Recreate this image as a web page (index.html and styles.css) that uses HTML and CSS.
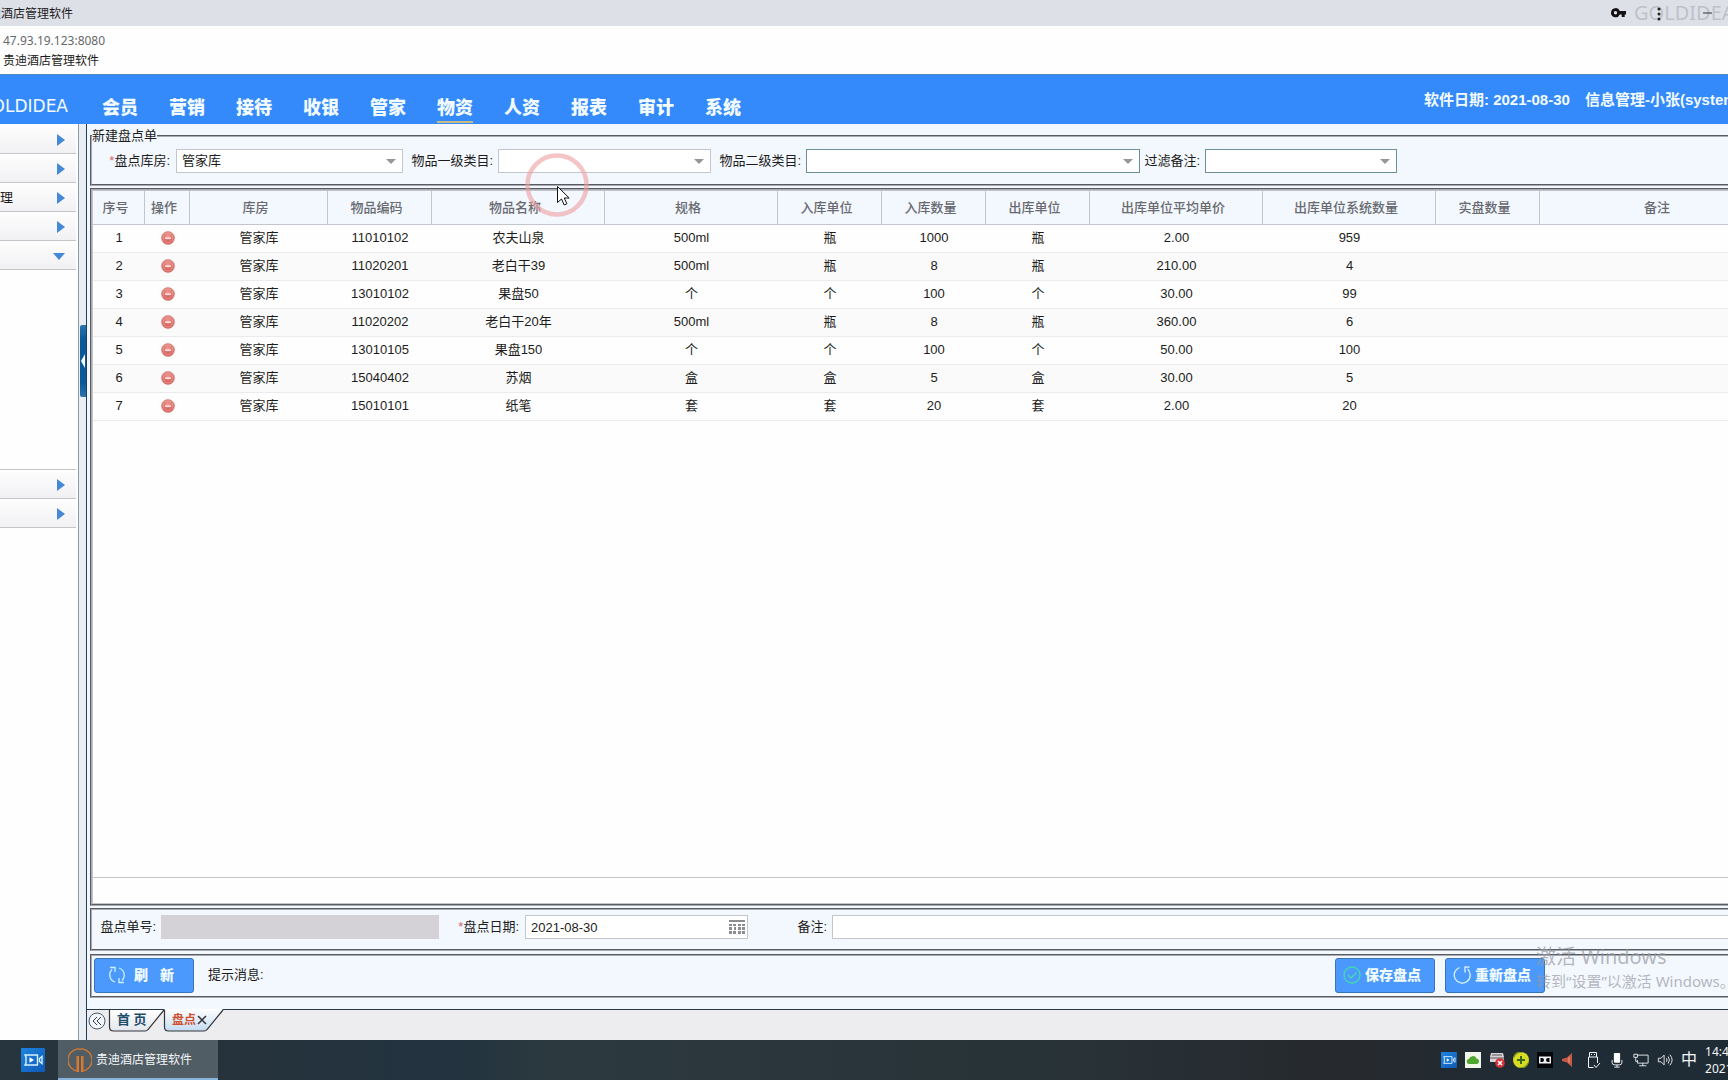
FILE: index.html
```html
<!DOCTYPE html>
<html lang="zh-CN">
<head>
<meta charset="utf-8">
<title>贵迪酒店管理软件</title>
<link rel="stylesheet" href="styles.css">
</head>
<body>
<svg class="defs" aria-hidden="true">
  <defs>
    <radialGradient id="redBall" cx="50%" cy="35%" r="65%"><stop offset="0" stop-color="#ee9a92"/><stop offset="1" stop-color="#cb4f4b"/></radialGradient>
    <linearGradient id="blueTile" x1="0" y1="0" x2="1" y2="1"><stop offset="0" stop-color="#1c86e0"/><stop offset="1" stop-color="#1158b4"/></linearGradient>
    <linearGradient id="tabFill" x1="0" y1="0" x2="0" y2="1"><stop offset="0" stop-color="#ffffff"/><stop offset="1" stop-color="#e2e6ec"/></linearGradient>
    <linearGradient id="tabActive" x1="0" y1="0" x2="0" y2="1"><stop offset="0" stop-color="#ffffff"/><stop offset="1" stop-color="#c4dcf2"/></linearGradient>
    <symbol id="minus" viewBox="0 0 14 14"><circle cx="7" cy="7" r="6.5" fill="url(#redBall)" stroke="#d8837d" stroke-width=".6"/><circle cx="7" cy="7" r="5" fill="none" stroke="#f0b0aa" stroke-width=".7"/><rect x="4" y="6.200" width="6" height="1.800" rx=".5" fill="#fbdcd8"/></symbol>
    <symbol id="recorder" viewBox="0 0 24 24"><rect width="24" height="24" rx="1" fill="url(#blueTile)"/><path d="M4 7h12.500v10H4l1-2V9zM18.500 10.500L21 8.500v7l-2.500-2z" fill="none" stroke="#d6f1ff" stroke-width="1.400"/><path d="M8.500 9.300l4.500 2.700-4.500 2.700z" fill="#fff"/></symbol>
  </defs>
</svg>

<header class="titlebar">
  <div class="window-title"><span>贵迪酒店管理软件</span></div>
  <svg class="key" viewBox="0 0 15 10"><path d="M4.500 0a4.500 4.500 0 0 1 4.200 3H15v3.500h-1.300V9h-3V6.500H8.700A4.500 4.500 0 1 1 4.500.3zm0 3a1.700 1.700 0 1 0 0 3.400 1.700 1.700 0 0 0 0-3.400z" fill="#111" fill-rule="evenodd"/></svg>
  <div class="mark">GOLDIDEA
    <svg class="dots" viewBox="0 0 4 14"><circle cx="2" cy="2" r="1.500"/><circle cx="2" cy="7" r="1.500"/><circle cx="2" cy="12" r="1.500"/></svg>
    <svg class="minimize" viewBox="0 0 9 2"><path d="M0 1h9" stroke="#333"/></svg>
  </div>
</header>
<div class="address"><div class="host">47.93.19.123:8080</div><div>贵迪酒店管理软件</div></div>

<div class="topnav">
  <div class="logo"><span>GOLDIDEA</span></div>
  <nav class="menu">
    <a href="#">会员</a><a href="#">营销</a><a href="#">接待</a><a href="#">收银</a><a href="#">管家</a><a href="#" class="on">物资</a><a href="#">人资</a><a href="#">报表</a><a href="#">审计</a><a href="#">系统</a>
  </nav>
  <div class="session"><span>软件日期: 2021-08-30</span><span>信息管理-小张(system)</span></div>
</div>

<main class="main">
  <aside class="sidebar">
    <div class="item"><i class="right"></i></div>
    <div class="item"><i class="right"></i></div>
    <div class="item"><span>理</span><i class="right"></i></div>
    <div class="item"><i class="right"></i></div>
    <div class="item"><i class="down"></i></div>
    <div class="submenu"></div>
    <div class="item"><i class="right"></i></div>
    <div class="item"><i class="right"></i></div>
  </aside>
  <div class="splitter"><button class="handle" aria-label="收起"><svg viewBox="0 0 4 14"><path d="M4 0v14L0 7z" fill="#fff"/></svg></button></div>

  <section class="content">
    <fieldset class="panel filters">
      <legend>新建盘点单</legend>
      <div class="row">
        <label for="store" class="first"><em>*</em>盘点库房:</label>
        <span class="pick w-store"><select id="store"><option>管家库</option></select></span>
        <label for="cat1">物品一级类目:</label>
        <span class="pick w-cat1"><select id="cat1"><option></option></select></span>
        <label for="cat2">物品二级类目:</label>
        <span class="pick w-cat2 strong"><select id="cat2"><option></option></select></span>
        <label for="memo" class="tight">过滤备注:</label>
        <span class="pick w-memo strong"><select id="memo"><option></option></select></span>
      </div>
    </fieldset>

    <div class="panel grid">
      <div class="scroll">
        <table>
          <colgroup><col class="c-no"><col class="c-op"><col class="c-store"><col class="c-m"><col class="c-l"><col class="c-l"><col class="c-m"><col class="c-m"><col class="c-m"><col class="c-l"><col class="c-l"><col class="c-m"><col class="c-memo"></colgroup>
          <thead><tr><th>序号</th><th>操作</th><th>库房</th><th>物品编码</th><th>物品名称</th><th>规格</th><th>入库单位</th><th>入库数量</th><th>出库单位</th><th>出库单位平均单价</th><th>出库单位系统数量</th><th>实盘数量</th><th>备注</th></tr></thead>
          <tbody>
            <tr><td>1</td><td><button class="del" aria-label="删除"><svg><use href="#minus"/></svg></button></td><td>管家库</td><td>11010102</td><td>农夫山泉</td><td>500ml</td><td>瓶</td><td>1000</td><td>瓶</td><td>2.00</td><td>959</td><td></td><td></td></tr>
            <tr><td>2</td><td><button class="del" aria-label="删除"><svg><use href="#minus"/></svg></button></td><td>管家库</td><td>11020201</td><td>老白干39</td><td>500ml</td><td>瓶</td><td>8</td><td>瓶</td><td>210.00</td><td>4</td><td></td><td></td></tr>
            <tr><td>3</td><td><button class="del" aria-label="删除"><svg><use href="#minus"/></svg></button></td><td>管家库</td><td>13010102</td><td>果盘50</td><td>个</td><td>个</td><td>100</td><td>个</td><td>30.00</td><td>99</td><td></td><td></td></tr>
            <tr><td>4</td><td><button class="del" aria-label="删除"><svg><use href="#minus"/></svg></button></td><td>管家库</td><td>11020202</td><td>老白干20年</td><td>500ml</td><td>瓶</td><td>8</td><td>瓶</td><td>360.00</td><td>6</td><td></td><td></td></tr>
            <tr><td>5</td><td><button class="del" aria-label="删除"><svg><use href="#minus"/></svg></button></td><td>管家库</td><td>13010105</td><td>果盘150</td><td>个</td><td>个</td><td>100</td><td>个</td><td>50.00</td><td>100</td><td></td><td></td></tr>
            <tr><td>6</td><td><button class="del" aria-label="删除"><svg><use href="#minus"/></svg></button></td><td>管家库</td><td>15040402</td><td>苏烟</td><td>盒</td><td>盒</td><td>5</td><td>盒</td><td>30.00</td><td>5</td><td></td><td></td></tr>
            <tr><td>7</td><td><button class="del" aria-label="删除"><svg><use href="#minus"/></svg></button></td><td>管家库</td><td>15010101</td><td>纸笔</td><td>套</td><td>套</td><td>20</td><td>套</td><td>2.00</td><td>20</td><td></td><td></td></tr>
          </tbody>
        </table>
      </div>
      <div class="grid-foot"></div>
    </div>

    <div class="panel form row">
      <label for="billno">盘点单号:</label>
      <input id="billno" class="w-bill" disabled>
      <label for="date" class="wide"><em>*</em>盘点日期:</label>
      <span class="datebox w-date"><input id="date" value="2021-08-30"><svg viewBox="0 0 16 15"><g fill="#8b8d90"><path d="M0 0h16v2H0z"/><path d="M0 4h3v2H0zM4 4h3v2H4zM9 4h3v2H9zM13 4h3v2h-3zM0 7h3v3H0zM5 7h2v3H5zM9 7h3v3H9zM13 7h3v3h-3zM0 11h3v3H0zM4 11h3v3H4zM9 11h3v3H9zM13 11h3v3h-3z"/></g></svg></span>
      <label for="remark" class="wider">备注:</label>
      <input id="remark" class="w-remark">
    </div>

    <div class="panel actions">
      <button class="btn refresh"><svg viewBox="0 0 18 18"><g fill="none" stroke="#c9f1ff" stroke-width="1.300"><path d="M7 16A7.500 7.500 0 0 1 4 3.500M2 1.500h5v4.500M11 2a7.500 7.500 0 0 1 3 12.500M16 16.500h-5V12"/></g></svg><span>刷</span><span>新</span></button>
      <span class="tip">提示消息:</span>
      <button class="btn"><svg viewBox="0 0 18 18"><g fill="none" stroke="#42dcae" stroke-width="1.300"><circle cx="9" cy="9" r="8"/><path d="M5 9l3 3 5.500-5.500"/></g></svg>保存盘点</button>
      <button class="btn restart"><svg viewBox="0 0 18 18"><g fill="none" stroke="#d6f4ff" stroke-width="1.300"><path d="M6.500 1.500a8 8 0 1 0 8 1.500M16.500 1.200L12 1v5.500"/></g></svg>重新盘点</button>
      <div class="activate"><div class="big">激活 Windows</div><div>转到“设置”以激活 Windows。</div></div>
    </div>

    <div class="tabs">
      <button class="back" aria-label="向左"><svg viewBox="0 0 18 18"><circle cx="9" cy="9" r="8" fill="#f2f5fa" stroke="#465a70"/><path d="M9 5L5 9l4 4M13 5L9 9l4 4" fill="none" stroke="#333d4a"/></svg></button>
      <a href="#" class="tab home"><svg viewBox="0 0 56 22"><path d="M.5 0v17q0 4 4 4H36q2 0 3-1.500L55 0z" fill="url(#tabFill)"/><path d="M.5 0v17q0 4 4 4H36q2 0 3-1.500L55 0" fill="none" stroke="#33363d" stroke-width="1.200"/></svg><span>首 页</span></a>
      <a href="#" class="tab current"><svg viewBox="0 0 60 22"><path d="M.5-1v18q0 4 4 4H40q2 0 3-1.500L59-1z" fill="url(#tabActive)"/><path d="M.5 0v17q0 4 4 4H40q2 0 3-1.500L59 0" fill="none" stroke="#33363d" stroke-width="1.200"/><path d="M34 6l8 8M42 6l-8 8" stroke="#3a3a40" stroke-width="1.600"/></svg><span>盘点</span></a>
    </div>
  </section>
</main>

<footer class="taskbar">
  <svg class="launch" viewBox="0 0 24 24"><use href="#recorder"/></svg>
  <div class="app"><svg viewBox="0 0 24 24"><g fill="none" stroke="#c8743a" stroke-width="1.500"><path d="M8.500 23A11.300 11.300 0 0 1 9 1h6a11.300 11.300 0 0 1 .5 22"/></g><path d="M8.500 8H11v16H8.500zM13 8h2.500v16H13z" fill="#d9792f"/></svg>贵迪酒店管理软件</div>
  <div class="tray">
    <svg viewBox="0 0 16 16"><use href="#recorder"/></svg>
    <svg viewBox="0 0 16 16"><path d="M0 0h16v16H0z" fill="#f0f6ea"/><path d="M4.500 12a2.500 2.500 0 0 1-.5-5 4 4 0 0 1 7.500-.5A2.800 2.800 0 0 1 12 12z" fill="#4ea72c"/></svg>
    <svg viewBox="0 0 16 16"><path d="M2 1h12l1 4v5H1V5z" fill="#d8d3d6"/><path d="M3 3h10M1 6h14" stroke="#555"/><circle cx="11" cy="11" r="4.800" fill="#d5333a"/><path d="M9 9l4 4M13 9l-4 4" stroke="#fff" stroke-width="1.500"/></svg>
    <svg viewBox="0 0 16 16"><circle cx="8" cy="8" r="8" fill="#d8dc22"/><path d="M1 5a8 8 0 0 1 8-5M15 11a8 8 0 0 1-8 5" stroke="#7b9b1c" stroke-width="1.500" fill="none"/><path d="M8 4v8M4 8h8" stroke="#3c6a1c" stroke-width="2"/></svg>
    <svg viewBox="0 0 16 16"><path d="M0 0h16v16H0z" fill="#05070a"/><path d="M2 4.500h12v7H2z" fill="#f0f0f0"/><path d="M3.500 6H5a2 2 0 0 1 0 4H3.500zM12.500 6H11a2 2 0 0 0 0 4h1.500z" fill="#05070a"/></svg>
    <svg class="horn" viewBox="0 0 12 16"><path d="M11 1v14L6 10.500 1 9V7l5-1.500z" fill="#c65a45"/><path d="M8 5v6" stroke="#eaa090"/></svg>
    <svg class="line" viewBox="0 0 16 18"><path d="M4.500 6V1.500h7V6M6.500 3v1M9.500 3v1M3.500 6h9v6M3.500 6v10.500h5M9 14l2 2.500 4-4.500" /></svg>
    <svg viewBox="0 0 16 18"><rect x="4.500" y="1" width="7" height="11" rx="1" fill="#fff"/><path d="M2.500 9v3q0 2.500 3 2.500h5q3 0 3-2.500V9M8 14.500V17M5 17h6" fill="none" stroke="#fff"/></svg>
    <svg class="line" viewBox="0 0 18 18"><path d="M5 3.500h12v9H5V9M1 2.500h4v3.500H1zM3 6v4.500h2M11 12.500v3M7 15.500h8"/></svg>
    <svg class="line" viewBox="0 0 18 18"><path d="M1.500 7h3L8 3.500v11L4.500 11h-3zM10.500 7q1.500 2 0 4M12.500 5q3 4 0 8M14.500 3q5 6 0 12"/></svg>
    <span class="ime">中</span>
    <div class="clock"><div>14:45</div><div>2021/8/30</div></div>
  </div>
</footer>

<svg class="pointer" viewBox="0 0 64 64"><circle cx="32" cy="32" r="29.500" fill="none" stroke="#ee9ea0" stroke-opacity=".6" stroke-width="4.500"/><path d="M32.500 33.500v16l4-3.500 2.700 6 2.700-1.200-2.700-5.800h5z" fill="#fff" stroke="#111"/></svg>
</body>
</html>
```

FILE: styles.css
```css
* { box-sizing: border-box; }
html, body { height: 100%; }
body {
  margin: 0;
  display: flex;
  flex-direction: column;
  overflow: hidden;
  font: 13px/20px "Liberation Sans", "Noto Sans CJK SC", sans-serif;
  color: #1c1c20;
  background: #fefefe;
}
a { color: inherit; text-decoration: none; }
button { font: inherit; color: inherit; padding: 0; border: 0; background: none; }
svg { display: block; flex: none; }
.defs { position: absolute; width: 0; height: 0; }

/* browser chrome */
.titlebar {
  flex: none; height: 26px;
  display: flex; align-items: center;
  background: #dee0e8;
  font-size: 12px;
}
.window-title { width: 73px; padding-top: 2px; overflow: hidden; display: flex; justify-content: flex-end; white-space: nowrap; }
.key { width: 15px; height: 10px; margin-left: auto; }
.mark {
  position: relative;
  width: 94px; margin-left: 8px;
  white-space: nowrap;
  font: 20px/26px "Noto Sans", sans-serif;
  color: #bfc1c9;
}
.dots { position: absolute; left: 23px; top: 7px; width: 4px; height: 14px; fill: #222; }
.minimize { position: absolute; left: 69px; top: 12px; width: 9px; height: 2px; }
.address {
  flex: none; height: 48px; padding: 5px 3px;
  font-size: 12px; line-height: 20px;
}
.host { font-family: "Noto Sans", sans-serif; color: #66686c; }

/* blue navigation */
.topnav {
  flex: none; height: 50px;
  display: flex;
  background: #348afa;
  border-top: 1px solid #4f86c4;
  color: #f2fbff;
  font-weight: bold;
}
.logo {
  width: 68px; padding-top: 20px;
  overflow: hidden; display: flex; justify-content: flex-end;
  font: 17px/22px "DejaVu Sans", sans-serif;
}
.menu { display: flex; gap: 31px; margin: 20px 0 0 34px; font-size: 18px; line-height: 26px; font-weight: 900; }
.menu a { height: 28px; white-space: nowrap; }
.menu .on { border-bottom: 2px solid #c9bd85; }
.session {
  width: 304px; margin-left: auto; padding-top: 14px;
  display: flex; gap: 15px;
  font-size: 15px; line-height: 22px; white-space: nowrap;
}

.main { flex: 1; min-height: 0; display: flex; }

/* sidebar */
.sidebar { flex: none; width: 78px; padding: 1px 2px 0 0; }
.item {
  height: 29px; padding: 2px 11px 0 0;
  display: flex; align-items: center;
  border-bottom: 1px solid #c4c4ca;
  background: linear-gradient(#fefefe, #f1f0f3);
  font-size: 13px;
}
.item i { margin-left: auto; border: 6px solid transparent; }
.item .right { border-width: 6px 0 6px 8px; border-left-color: #4489d6; }
.item .down { border-width: 7px 6px 0; border-top-color: #4489d6; }
.submenu { height: 200px; border-bottom: 1px solid #c4c4ca; }

.splitter {
  flex: none; width: 9px;
  display: flex; align-items: flex-start;
  border: solid; border-width: 0 1px;
  border-color: #8d9aa8 #1f3c58 #8d9aa8 #8d9aa8;
  background: #e9edf4;
}
.handle {
  width: 6px; height: 72px; margin: 201px 0 0 auto;
  display: flex; align-items: center; justify-content: center;
  border-radius: 2px 0 0 2px;
  background: linear-gradient(#2c74ad, #0c5898 20%, #0c5898 80%, #2c74ad);
}
.handle svg { width: 4px; height: 14px; }

/* work area */
.content {
  flex: 1; min-width: 0;
  display: flex; flex-direction: column;
  background: #f2f8fe;
}
.panel {
  flex: none; margin: 3px 0 0 3px;
  border: groove #a8abb4; border-width: 2px 0 2px 2px;
  background: #f3f7fe;
}
.row { display: flex; align-items: center; }
label { flex: none; text-align: right; white-space: nowrap; }
em { color: #d06a6a; font-style: normal; }

.filters { height: 60px; margin-top: 2px; padding: 3px 0 0; min-width: 0; }
.filters legend { padding: 0; line-height: 20px; }
.filters label { width: 90px; margin-right: 5px; }
.filters .first { width: 78px; margin-right: 6px; }
.filters .tight { width: 60px; }

.pick { position: relative; flex: none; height: 24px; }
.pick::after {
  content: ""; position: absolute; right: 7px; top: 10px;
  border: solid transparent; border-width: 5px 5px 0; border-top-color: #94979b;
}
select, input {
  display: block; width: 100%; height: 24px; margin: 0;
  padding: 0 5px;
  border: 1px solid #c3c6cd; border-radius: 0;
  background: #fff;
  font: inherit; color: #1c1c20;
  appearance: none;
}
.strong select { border-color: #6d8f96; }
.w-store { width: 227px; }
.w-cat1 { width: 213px; }
.w-cat2 { width: 334px; }
.w-memo { width: 192px; }

.grid { flex: 1; min-height: 0; margin-top: 2px; display: flex; flex-direction: column; background: #fefefe; }
.scroll { flex: 1; min-height: 0; overflow: hidden; border: solid #c2c4ca; border-width: 1px 0 0 1px; }
.grid-foot { flex: none; height: 27px; border: solid #c2c4ca; border-width: 1px 0 1px 1px; }
table { width: 1688px; table-layout: fixed; border-collapse: separate; border-spacing: 0; }
.c-no { width: 52px; }
.c-op { width: 45px; }
.c-store { width: 138px; }
.c-m { width: 104px; }
.c-l { width: 173px; }
th {
  height: 34px; padding: 0 6px 0 0;
  border-right: 1px solid #c2c5ce; border-bottom: 1px solid #c2c5ce;
  background: #f3f7fe;
  color: #686a70; font-weight: 500;
}
td { height: 28px; padding: 0 0 2px; text-align: center; border-bottom: 1px solid #ebebed; }
tbody tr:nth-child(even) { background: #fafafa; }
.del { display: block; margin: 0 auto; }
.del svg { width: 14px; height: 14px; }

.form { height: 43px; margin-top: 2px; padding: 0 0 5px 8px; }
.form label { width: 56px; margin-right: 5px; }
.form .wide { width: 80px; margin-right: 6px; }
.form .wider { width: 79px; margin-right: 5px; }
.w-bill { width: 278px; flex: none; }
.w-bill:disabled { background: #d4d2d7; border-color: #d4d2d7; }
.datebox { position: relative; flex: none; width: 223px; }
.datebox svg { position: absolute; right: 3px; top: 5px; width: 16px; height: 15px; }
.w-remark { flex: 1; border-right: 0; }

.actions { position: relative; height: 44px; display: flex; align-items: center; padding: 0 183px 2px 2px; }
.btn {
  flex: none; width: 100px; height: 35px; padding-right: 6px;
  display: flex; align-items: center; justify-content: center; gap: 4px;
  border: 1px solid #3a74b4; border-radius: 3px;
  background: #4b99fc;
  color: #effbff; font-weight: 900; font-size: 14px;
}
.btn svg { width: 18px; height: 18px; }
.refresh { gap: 12px; }
.refresh svg { margin-right: -4px; }
.tip { margin: 0 auto 0 14px; }
.restart { margin-left: 10px; }
.activate {
  position: absolute; left: 1444px; top: -12px;
  white-space: nowrap; color: rgba(150, 153, 162, .7);
  font: 15px/22px "Noto Sans", "Noto Sans CJK SC", sans-serif;
}
.activate .big { font-size: 20px; line-height: 26px; }

.tabs {
  flex: none; height: 31px; margin-top: 11px; padding-left: 1px;
  display: flex; align-items: flex-start;
  border-top: 1px solid #26384a;
  background: #ededf0;
}
.back { margin: 2px 3px 0 0; }
.back svg { width: 18px; height: 18px; }
.tab { position: relative; height: 22px; font-weight: bold; color: #1d4d6c; }
.tab svg { height: 22px; overflow: visible; }
.tab span { position: absolute; left: 8px; top: 0; white-space: nowrap; }
.home { width: 55px; }
.home svg { width: 56px; }
.current svg { width: 60px; }
.current { color: #cf4f2d; font-size: 12px; }

/* desktop taskbar */
.taskbar {
  flex: none; height: 40px; padding-left: 21px;
  display: flex; align-items: center;
  background: linear-gradient(90deg, #27353f, #26323b 12%, #22333f 26%, #2c393f 32%, #283338 60%, #26292d 78%, #1f2c36 90%, #1f2c35);
  color: #f4f6f8; font-size: 12px;
}
.launch { width: 24px; height: 24px; }
.app {
  width: 160px; height: 40px; margin-left: 13px; padding: 2px 0 0 10px;
  display: flex; align-items: center; gap: 4px;
  background: #515d65; border-bottom: 2px solid #86b4da;
}
.app svg { width: 24px; height: 24px; }
.tray { width: 287px; margin-left: auto; display: flex; align-items: center; gap: 8px; white-space: nowrap; }
.tray svg { width: 16px; height: 16px; }
.tray .horn { width: 12px; margin-right: 4px; }
.tray .line { fill: none; stroke: #f0f3f5; width: 16px; height: 18px; }
.ime { font-size: 16px; }
.clock { width: 19px; margin-left: 0; font: 12px/17px "Noto Sans", sans-serif; }

/* click highlight and cursor */
.pointer { position: absolute; left: 525px; top: 153px; width: 64px; height: 64px; pointer-events: none; }
```
